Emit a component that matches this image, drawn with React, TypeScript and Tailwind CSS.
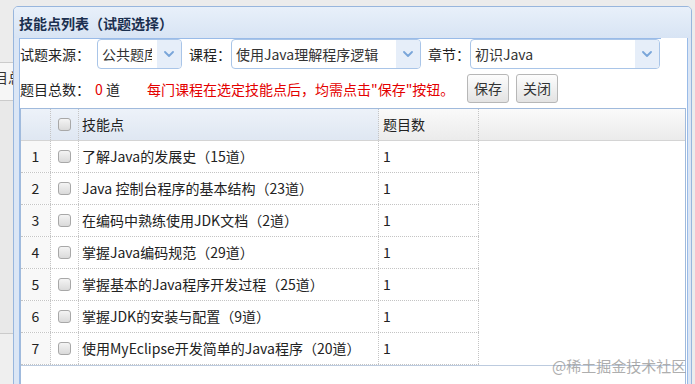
import React from "react";

const skills = [
  "了解Java的发展史（15道）",
  "Java 控制台程序的基本结构（23道）",
  "在编码中熟练使用JDK文档（2道）",
  "掌握Java编码规范（29道）",
  "掌握基本的Java程序开发过程（25道）",
  "掌握JDK的安装与配置（9道）",
  "使用MyEclipse开发简单的Java程序（20道）",
];

const Chevron = () => (
  <svg width="10" height="6" viewBox="0 0 10 6" fill="none">
    <path d="M1 1l4 4 4-4" stroke="#79a5d9" strokeWidth="1.8" strokeLinecap="round" strokeLinejoin="round" />
  </svg>
);

const Checkbox = () => (
  <div className="h-[13px] w-[13px] rounded-[3px] border border-[#a8a8a8] bg-linear-to-b from-[#f4f4f4] to-[#dadada]" />
);

function Select({ value, className }: { value: string; className: string }) {
  return (
    <div className={`flex h-[30px] overflow-hidden rounded-[4px] border border-[#a9c5e8] bg-white ${className}`}>
      <div className="min-w-0 flex-1 pl-[4px] pr-[5px]">
        <div className="overflow-hidden whitespace-nowrap leading-[28px] text-[#333]">{value}</div>
      </div>
      <div className="flex w-[24px] items-center justify-center bg-[#e6eef9]">
        <Chevron />
      </div>
    </div>
  );
}

function Button({ label }: { label: string }) {
  return (
    <button className="h-[29px] rounded-[3px] border border-[#b7b7b7] bg-linear-to-b from-[#fdfdfd] to-[#e3e3e3] px-[6px] leading-[27px] text-[#333]">
      {label}
    </button>
  );
}

export default function App() {
  return (
    <div className="relative flex h-[384px] w-[695px] overflow-hidden bg-[#ececec] font-['Noto_Sans_CJK_SC',sans-serif] text-[14px] text-[#222]">
      {/* page behind the dialog */}
      <div className="flex w-[13px] shrink-0 flex-col">
        <div className="h-[62px] bg-[#ececec]" />
        <div className="h-[38px] overflow-hidden border-t border-[#cbcbcb] bg-[#f6f6f6]">
          <div className="ml-[-20px] mt-[6px] whitespace-nowrap leading-[16px] text-[#333]">题目总数</div>
        </div>
        <div className="h-[233px] border-t border-[#cbcbcb] bg-[#e9e9e9]" />
        <div className="flex-1 border-t border-[#cbcbcb] bg-[#efefef]" />
      </div>

      {/* dialog */}
      <div className="pt-[6px]">
        <div className="flex h-[400px] w-[679px] flex-col rounded-t-[5px] border border-[#98b6dd] bg-[#dbe6f5]">
          <div className="h-[31px] rounded-t-[4px] bg-linear-to-b from-[#e8f0fa] to-[#d8e4f4] pl-[5px] pt-[6px]">
            <span className="font-bold leading-[16px] text-[#1b2f4f]">技能点列表（试题选择）</span>
          </div>

          <div className="ml-[5px] flex w-[669px] flex-1 flex-col border-x border-[#99bbe8] bg-white">
            <div className="w-[641px] border-t border-[#99bbe8]">
              <div className="flex h-[30px] items-center">
                <span className="w-[77px] leading-[16px]">试题来源：</span>
                <Select value="公共题库" className="w-[85px]" />
                <span className="ml-[7px] w-[42px] leading-[16px]">课程：</span>
                <Select value="使用Java理解程序逻辑" className="w-[190px]" />
                <span className="ml-[7px] w-[42px] leading-[16px]">章节：</span>
                <Select value="初识Java" className="w-[190px]" />
              </div>
            </div>
            <div className="flex h-[39px] items-center">
              <span className="w-[75px] leading-[16px]">题目总数：</span>
              <span className="w-[52px] leading-[16px]">
                <span className="text-[#e40000]">0</span> 道
              </span>
              <span className="w-[320px] whitespace-nowrap leading-[16px] text-[#e40000]">
                每门课程在选定技能点后，均需点击"保存"按钮。
              </span>
              <Button label="保存" />
              <div className="w-[7px]" />
              <Button label="关闭" />
            </div>

            <div className="flex w-[666px] flex-1 flex-col border-x border-t border-[#a0badc]">
              <div className="flex h-[32px] border-b border-[#d4d4d4]">
                <div className="w-[30px] border-r border-dotted border-[#c4c4c4] bg-linear-to-b from-[#edf2f9] to-[#dfe7f2]" />
                <div className="flex w-[28px] items-center justify-center border-r border-dotted border-[#c4c4c4] bg-linear-to-b from-[#edf2f9] to-[#dfe7f2]">
                  <Checkbox />
                </div>
                <div className="flex w-[300px] items-center border-r border-dotted border-[#c4c4c4] bg-linear-to-b from-[#edf2f9] to-[#dfe7f2] pl-[3px]">
                  技能点
                </div>
                <div className="flex w-[100px] items-center border-r border-dotted border-[#c4c4c4] bg-linear-to-b from-[#fafafa] to-[#ebebeb] pl-[4px]">
                  题目数
                </div>
                <div className="flex-1 bg-linear-to-b from-[#fafafa] to-[#ebebeb]" />
              </div>

              {skills.map((name, i) => (
                <div key={name} className="flex h-[32px] w-[458px] border-b border-dotted border-[#c4c4c4]">
                  <div className="flex w-[30px] items-center justify-center border-r border-dotted border-[#c4c4c4] bg-[#f8f8f8]">
                    {i + 1}
                  </div>
                  <div className="flex w-[28px] items-center justify-center border-r border-dotted border-[#c4c4c4]">
                    <Checkbox />
                  </div>
                  <div className="flex w-[300px] items-center whitespace-nowrap border-r border-dotted border-[#c4c4c4] pl-[3px]">
                    {name}
                  </div>
                  <div className="flex w-[100px] items-center border-r border-dotted border-[#c4c4c4] pl-[4px]">1</div>
                </div>
              ))}
              <div className="flex-1 border-t border-[#bccbdf]" />
            </div>
          </div>
        </div>
      </div>

      <div className="absolute left-[552px] top-[356px] whitespace-nowrap text-[15px] leading-[20px] text-[#8c8c8c] opacity-70">
        @稀土掘金技术社区
      </div>
    </div>
  );
}
